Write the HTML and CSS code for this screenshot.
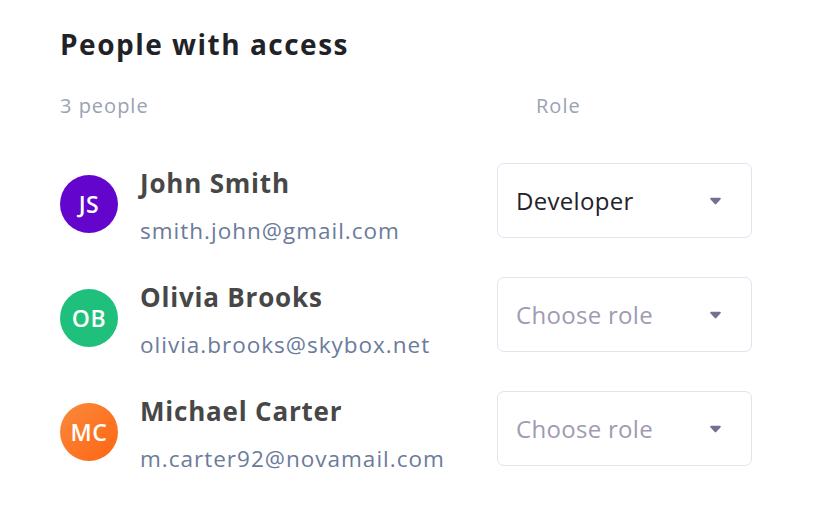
FILE: index.html
```html
<!DOCTYPE html>
<html>
<head>
<meta charset="utf-8">
<link rel="stylesheet" href="styles.css">
</head>
<body>
<div class="panel">
  <h1 class="title">People with access</h1>
  <div class="head">
    <span class="count">3 people</span>
    <span class="role-label">Role</span>
  </div>
  <div class="list">
    <div class="row">
      <div class="person">
        <div class="avatar av-purple">JS</div>
        <div class="info">
          <div class="name">John Smith</div>
          <div class="email">smith.john@gmail.com</div>
        </div>
      </div>
      <div class="select">
        <span class="value">Developer</span>
        <svg class="caret" width="11" height="8" viewBox="0 0 12 8"><path d="M1.2 0.5h9.6a1 1 0 0 1 .8 1.6L6.8 7.3a1 1 0 0 1-1.6 0L.4 2.1A1 1 0 0 1 1.2.5z" fill="#756f92"/></svg>
      </div>
    </div>
    <div class="row">
      <div class="person">
        <div class="avatar av-green">OB</div>
        <div class="info">
          <div class="name">Olivia Brooks</div>
          <div class="email">olivia.brooks@skybox.net</div>
        </div>
      </div>
      <div class="select">
        <span class="value placeholder">Choose role</span>
        <svg class="caret" width="11" height="8" viewBox="0 0 12 8"><path d="M1.2 0.5h9.6a1 1 0 0 1 .8 1.6L6.8 7.3a1 1 0 0 1-1.6 0L.4 2.1A1 1 0 0 1 1.2.5z" fill="#756f92"/></svg>
      </div>
    </div>
    <div class="row">
      <div class="person">
        <div class="avatar av-orange">MC</div>
        <div class="info">
          <div class="name">Michael Carter</div>
          <div class="email">m.carter92@novamail.com</div>
        </div>
      </div>
      <div class="select">
        <span class="value placeholder">Choose role</span>
        <svg class="caret" width="11" height="8" viewBox="0 0 12 8"><path d="M1.2 0.5h9.6a1 1 0 0 1 .8 1.6L6.8 7.3a1 1 0 0 1-1.6 0L.4 2.1A1 1 0 0 1 1.2.5z" fill="#756f92"/></svg>
      </div>
    </div>
  </div>
</div>
</body>
</html>
```
FILE: styles.css
```css
html, body {
  margin: 0;
  padding: 0;
  background: #ffffff;
}
body {
  font-family: "Open Sans", "Noto Sans", sans-serif;
  width: 813px;
  height: 510px;
  overflow: hidden;
}
.panel {
  padding: 25px 61px 0 60px;
}
.title {
  margin: 0;
  font-size: 28px;
  line-height: 38px;
  font-weight: 700;
  letter-spacing: 1.5px;
  color: #1f2328;
}
.head {
  display: grid;
  grid-template-columns: 437px 255px;
  margin-top: 31px;
  font-size: 20px;
  line-height: 24px;
  letter-spacing: 1px;
  color: #9aa2b4;
}
.role-label {
  padding-left: 39px;
}
.list {
  margin-top: 45px;
  display: flex;
  flex-direction: column;
  gap: 34px;
}
.row {
  display: grid;
  grid-template-columns: 437px 255px;
  align-items: start;
}
.person {
  display: flex;
  align-items: flex-start;
  gap: 22px;
}
.avatar {
  width: 58px;
  height: 58px;
  margin-top: 12px;
  border-radius: 50%;
  flex: none;
  display: flex;
  align-items: center;
  justify-content: center;
  color: #ffffff;
  font-size: 23px;
  font-weight: 600;
  letter-spacing: 0.5px;
}
.av-purple { background: #6305cc; }
.av-green { background: #1fc07c; }
.av-orange { background: linear-gradient(135deg, #f98a3c, #fe6512); }
.info {
  margin-top: 7px;
  display: flex;
  flex-direction: column;
  gap: 23px;
}
.name {
  font-size: 26px;
  line-height: 26px;
  font-weight: 700;
  letter-spacing: 0.8px;
  color: #474747;
}
.email {
  font-size: 22.5px;
  line-height: 24px;
  letter-spacing: 1px;
  color: #6b7b9a;
}
.select {
  height: 75px;
  box-sizing: border-box;
  border: 1.5px solid #e3e3ef;
  border-radius: 7px;
  display: flex;
  align-items: center;
  justify-content: space-between;
  padding: 0 30px 0 18px;
}
.value {
  font-size: 24px;
  letter-spacing: 0.3px;
  color: #23222b;
}
.value.placeholder {
  color: #9e9bb3;
}
.caret {
  display: block;
}
```
